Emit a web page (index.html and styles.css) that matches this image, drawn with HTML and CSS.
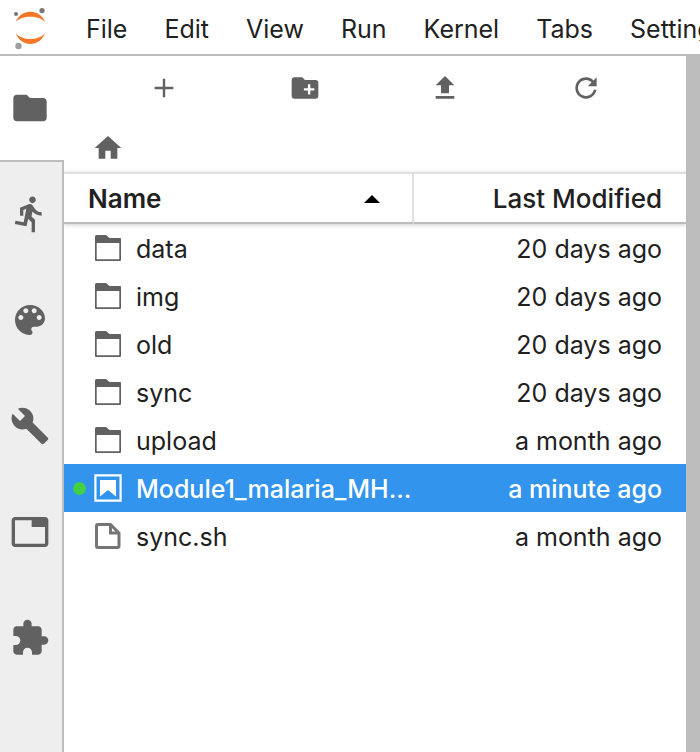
FILE: index.html
```html
<!DOCTYPE html>
<html lang="en">
<head>
<meta charset="utf-8">
<title>JupyterLab</title>
<link rel="stylesheet" href="styles.css">
</head>
<body>
<svg class="symbols" aria-hidden="true">
  <symbol id="dir" viewBox="0 0 32 32"><path fill-rule="evenodd" d="M4.500 3H14l3.500 3H28q1 0 1 1v21q0 1-1 1H4q-1 0-1-1V4.500Q3 3 4.500 3zM4.700 11v16.300h22.600V11z"/></symbol>
</svg>
<header class="menubar">
  <svg class="logo" viewBox="0 0 60 54" role="img" aria-label="Jupyter">
    <path fill="#f37726" d="M15.700 22C18 15.500 24 11.700 30.400 11.700S42.800 15.500 45 22C42 18.400 36 16.700 30.400 16.700S18.800 18.400 15.700 22zM15.700 33C18 39.800 24 44 30.400 44S42.800 39.800 45 33C42 37 36 39 30.400 39S18.800 37 15.700 33z"/>
    <circle cx="16" cy="14" r="2" fill="#767677"/><circle cx="42" cy="10.600" r="2.600" fill="#767677"/><circle cx="18.500" cy="46" r="3.200" fill="#9e9e9e"/>
  </svg>
  <nav class="menus">
    <button>File</button><button>Edit</button><button>View</button><button>Run</button><button>Kernel</button><button>Tabs</button><button>Settings</button>
  </nav>
</header>
<main class="workspace">
  <nav class="sidebar">
    <button class="tab current" aria-label="File Browser"><svg viewBox="0 0 24 24"><path d="M10 4H4c-1.100 0-1.990.900-1.990 2L2 18c0 1.100.900 2 2 2h16c1.100 0 2-.900 2-2V8c0-1.100-.900-2-2-2h-8l-2-2z"/></svg></button>
    <button class="tab" aria-label="Running"><svg viewBox="0 0 24 24"><path d="M13.490 5.480c1.100 0 2-.9 2-2s-.9-2-2-2-2 .9-2 2 .9 2 2 2zm-3.600 13.900l1-4.400 2.100 2v6h2v-7.500l-2.100-2 .6-3c1.300 1.500 3.300 2.500 5.500 2.500v-2c-1.900 0-3.500-1-4.300-2.400l-1-1.600c-.4-.6-1-1-1.700-1-.3 0-.5.1-.8.1l-5.200 2.200v4.700h2v-3.400l1.800-.7-1.600 8.100-4.900-1-.4 2 7 1.400z"/></svg></button>
    <button class="tab" aria-label="Commands"><svg viewBox="0 0 24 24"><path d="M12 3c-4.970 0-9 4.030-9 9s4.030 9 9 9c.83 0 1.500-.67 1.500-1.500 0-.39-.15-.74-.39-1.010-.23-.26-.38-.61-.38-.99 0-.83.67-1.500 1.500-1.500H16c2.760 0 5-2.240 5-5 0-4.420-4.030-8-9-8zm-5.500 9c-.83 0-1.500-.67-1.500-1.500S5.670 9 6.500 9 8 9.670 8 10.500 7.330 12 6.500 12zm3-4C8.670 8 8 7.330 8 6.500S8.670 5 9.500 5s1.500.67 1.500 1.500S10.330 8 9.500 8zm5 0c-.83 0-1.500-.67-1.500-1.500S13.670 5 14.500 5s1.500.67 1.500 1.500S15.330 8 14.500 8zm3 4c-.83 0-1.500-.67-1.500-1.500S16.670 9 17.500 9s1.500.67 1.500 1.500-.67 1.500-1.500 1.500z"/></svg></button>
    <button class="tab" aria-label="Cell Tools"><svg viewBox="0 0 24 24"><path d="M22.700 19l-9.100-9.100c.9-2.300.4-5-1.500-6.900-2-2-5-2.400-7.400-1.300L9 6 6 9 1.600 4.700C.4 7.100.9 10.100 2.900 12.100c1.900 1.900 4.600 2.400 6.900 1.500l9.100 9.100c.4.4 1 .4 1.400 0l2.300-2.300c.5-.4.5-1.100.1-1.400z"/></svg></button>
    <button class="tab" aria-label="Open Tabs"><svg viewBox="0 0 24 24"><path d="M21 3H3c-1.100 0-2 .9-2 2v14c0 1.100.9 2 2 2h18c1.100 0 2-.9 2-2V5c0-1.100-.9-2-2-2zm0 16H3V5h10v4h8v10z"/></svg></button>
    <button class="tab" aria-label="Extensions"><svg viewBox="0 0 24 24"><path d="M20.500 11H19V7c0-1.100-.9-2-2-2h-4V3.500C13 2.120 11.880 1 10.500 1S8 2.120 8 3.500V5H4c-1.100 0-1.990.9-1.990 2v3.800H3.500c1.490 0 2.700 1.210 2.700 2.700s-1.210 2.700-2.700 2.700H2V20c0 1.100.9 2 2 2h3.800v-1.500c0-1.490 1.210-2.700 2.700-2.700 1.490 0 2.700 1.210 2.700 2.700V22H17c1.100 0 2-.9 2-2v-4h1.500c1.380 0 2.500-1.120 2.500-2.500S21.880 11 20.500 11z"/></svg></button>
  </nav>
  <section class="browser">
    <div class="toolbar">
      <button aria-label="New Launcher"><svg class="icon" viewBox="0 0 24 24"><path d="M19 12.900h-6.100V19h-1.800v-6.100H5v-1.800h6.100V5h1.800v6.100H19z"/></svg></button>
      <button aria-label="New Folder"><svg class="icon" viewBox="0 0 24 24"><path d="M20 6h-8l-2-2H4c-1.110 0-1.990.89-1.990 2L2 18c0 1.110.89 2 2 2h16c1.110 0 2-.89 2-2V8c0-1.110-.89-2-2-2zm-1 7.900h-3v3h-1.800v-3h-3v-1.800h3v-3H16v3h3v1.800z"/></svg></button>
      <button aria-label="Upload Files"><svg class="icon" viewBox="0 0 24 24"><path d="M9 16h6v-6h4l-7-7-7 7h4zm-4 2h14v2H5z"/></svg></button>
      <button aria-label="Refresh File List"><svg class="icon" viewBox="0 0 18 18"><path d="M9 13.500c-2.490 0-4.500-2.010-4.500-4.500S6.510 4.500 9 4.500c1.240 0 2.360.52 3.170 1.330L10 8h5V3l-1.760 1.760C12.150 3.680 10.660 3 9 3 5.690 3 3.010 5.690 3.010 9S5.690 15 9 15c2.970 0 5.430-2.160 5.900-5h-1.520c-.46 2-2.240 3.500-4.380 3.500z"/></svg></button>
    </div>
    <div class="crumbs"><a href="#" aria-label="Home"><svg class="icon" viewBox="0 0 24 24"><path d="M10 20v-6h4v6h5v-8h3L12 3 2 12h3v8z"/></svg></a></div>
    <table class="listing">
      <thead>
        <tr><th class="name" aria-sort="ascending"><div class="sort">Name <svg class="caret" viewBox="0 0 16 8"><path d="M0 8L8 0l8 8z"/></svg></div></th><th class="modified">Last Modified</th></tr>
      </thead>
      <tbody>
        <tr><td><div class="entry"><svg class="icon"><use href="#dir"/></svg><span>data</span></div></td><td class="modified">20 days ago</td></tr>
        <tr><td><div class="entry"><svg class="icon"><use href="#dir"/></svg><span>img</span></div></td><td class="modified">20 days ago</td></tr>
        <tr><td><div class="entry"><svg class="icon"><use href="#dir"/></svg><span>old</span></div></td><td class="modified">20 days ago</td></tr>
        <tr><td><div class="entry"><svg class="icon"><use href="#dir"/></svg><span>sync</span></div></td><td class="modified">20 days ago</td></tr>
        <tr><td><div class="entry"><svg class="icon"><use href="#dir"/></svg><span>upload</span></div></td><td class="modified">a month ago</td></tr>
        <tr class="selected"><td><div class="entry running"><svg class="icon" viewBox="0 0 32 32"><path fill-rule="evenodd" d="M2.300 2.300h27.400v27.400H2.300zM4.500 4.500v23h23v-23zM8 8h16v16.500l-8-6.500-8 6.500z"/></svg><span>Module1_malaria_MH...</span></div></td><td class="modified">a minute ago</td></tr>
        <tr><td><div class="entry"><svg class="icon file" viewBox="0 0 32 32"><path d="M5.500 4.500h13l8.500 8.500V26q0 1.500-1.500 1.500h-20Q4.500 27.500 4.500 26V6Q4.500 4.500 5.500 4.500zM18.500 4.500V13H27"/></svg><span>sync.sh</span></div></td><td class="modified">a month ago</td></tr>
      </tbody>
    </table>
  </section>
</main>
</body>
</html>
```
FILE: styles.css
```css
* { box-sizing: border-box; }

body {
  display: flex;
  flex-direction: column;
  min-height: 100vh;
  margin: 0;
  background: #fff;
  color: #212121;
  font: 25px/46px Inter, "Liberation Sans", sans-serif;
}

button {
  padding: 0;
  border: 0;
  background: none;
  color: inherit;
  font: inherit;
}

svg { display: block; fill: #616161; }
.symbols { position: absolute; width: 0; height: 0; }
.icon { flex: none; width: 32px; height: 32px; }

.menubar {
  display: flex;
  height: 56px;
  border-bottom: 2px solid #bdbdbd;
  overflow: hidden;
}
.logo { flex: none; width: 60px; height: 54px; }
.menus { display: flex; gap: 37px; padding-left: 26px; }
.menus button { flex: none; padding-top: 4px; }

.workspace { display: flex; flex: 1; }

.sidebar {
  display: flex;
  flex: none;
  flex-direction: column;
  width: 64px;
  background: linear-gradient(to left, #bdbdbd 2px, #eee 2px);
}
.tab {
  display: flex;
  align-items: center;
  height: 106px;
  padding: 0 0 2px 10px;
}
.tab svg { width: 40px; height: 40px; }
.current {
  padding-bottom: 0;
  border-bottom: 2px solid #bdbdbd;
  background: #fff;
}

.browser {
  flex: 1;
  min-width: 0;
  border-right: 14px solid #bdbdbd;
  overflow: hidden;
}
.toolbar { display: flex; height: 64px; padding: 0 30px; }
.toolbar button { display: flex; flex: 1; align-items: center; justify-content: center; }
.crumbs { display: flex; align-items: center; height: 52px; padding: 4px 28px 0; }

.listing { width: 100%; border-collapse: separate; border-spacing: 0; table-layout: fixed; }
.listing thead { box-shadow: 0 1px 4px #0003; }
th {
  height: 52px;
  padding: 2px 24px 0;
  border-top: 2px solid #e0e0e0;
  border-bottom: 2px solid #bdbdbd;
  font-size: 26px;
  font-weight: 500;
  text-align: left;
}
.name { width: 350px; padding-right: 32px; border-right: 2px solid #e0e0e0; font-weight: 600; }
.sort { display: flex; align-items: center; justify-content: space-between; }
.caret { width: 16px; height: 8px; fill: #000; }
td { height: 48px; padding: 0; white-space: nowrap; }
.modified { padding: 2px 24px 0 0; text-align: right; }
.entry { position: relative; display: flex; align-items: center; gap: 12px; padding-left: 28px; }
.entry span { padding-top: 2px; }
.file { fill: none; stroke: #757575; stroke-width: 3; }

.selected { background: #3294ed; color: #fff; font-weight: 500; }
.selected .icon { fill: #fff; }
.running::before {
  content: "";
  position: absolute;
  left: 9px;
  width: 13px;
  height: 13px;
  border-radius: 50%;
  background: #43d047;
}
```
